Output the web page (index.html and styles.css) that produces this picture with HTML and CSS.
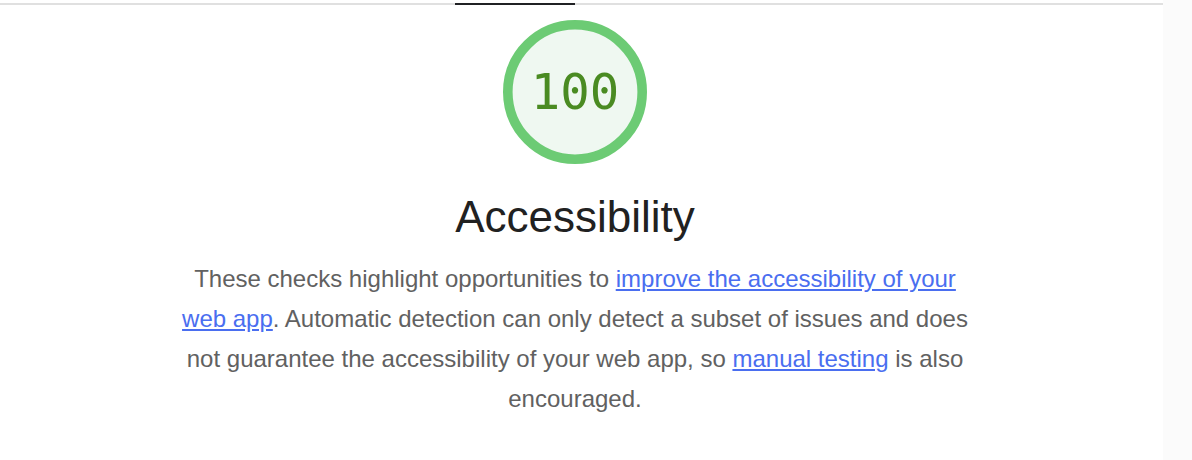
FILE: index.html
```html
<!DOCTYPE html>
<html>
<head>
<meta charset="utf-8">
<link rel="stylesheet" href="styles.css">
</head>
<body>
<div class="page">
  <main class="main">
    <div class="tabline"><span class="tab-active"></span></div>
    <section class="category">
      <div class="gauge">
        <svg class="gauge-svg" viewBox="0 0 120 120" width="144" height="144">
          <circle class="gauge-base" cx="60" cy="60" r="56"></circle>
        </svg>
        <span class="gauge-value">100</span>
      </div>
      <h2 class="title">Accessibility</h2>
      <p class="desc">These checks highlight opportunities to <a href="#">improve the accessibility of your web app</a>. Automatic detection can only detect a subset of issues and does not guarantee the accessibility of your web app, so <a href="#">manual testing</a> is also encouraged.</p>
    </section>
  </main>
  <aside class="side"></aside>
</div>
</body>
</html>
```
FILE: styles.css
```css
html, body {
  margin: 0;
  padding: 0;
  background: #ffffff;
}
body {
  font-family: "Liberation Sans", Arial, sans-serif;
  width: 1192px;
  height: 460px;
  overflow: hidden;
}
.page {
  display: flex;
  height: 460px;
}
.main {
  width: 1163px;
  padding-top: 3px;
}
.side {
  width: 29px;
  background: #fbfbfb;
}
.tabline {
  height: 2px;
  background: #e0e0e0;
  display: flex;
  padding-left: 455px;
}
.tab-active {
  width: 120px;
  height: 2px;
  background: #202124;
}
.category {
  width: 1150px;
  display: flex;
  flex-direction: column;
  align-items: center;
  padding-top: 15px;
}
.gauge {
  position: relative;
  width: 144px;
  height: 144px;
}
.gauge-svg {
  display: block;
}
.gauge-base {
  fill: #eff8f1;
  stroke: #6ccb74;
  stroke-width: 8;
}
.gauge-value {
  position: absolute;
  left: 0;
  right: 0;
  top: 0;
  bottom: 0;
  display: flex;
  align-items: center;
  justify-content: center;
  font-family: "DejaVu Sans Mono", "Liberation Mono", monospace;
  font-size: 49px;
  color: #4a8b22;
}
.title {
  margin: 28px 0 0;
  font-weight: normal;
  font-size: 44px;
  line-height: 50px;
  color: #212121;
}
.desc {
  margin: 17px 0 0;
  width: 800px;
  text-align: center;
  font-size: 24px;
  line-height: 40px;
  color: #616161;
}
.desc a {
  color: #4a6ef0;
  text-decoration: underline;
}
```
